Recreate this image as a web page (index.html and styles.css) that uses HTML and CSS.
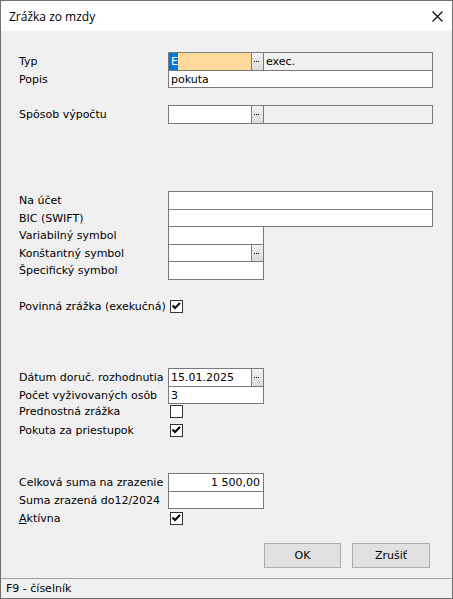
FILE: index.html
```html
<!DOCTYPE html>
<html lang="sk">
<head>
<meta charset="utf-8">
<title>Zrážka zo mzdy</title>
<link rel="stylesheet" href="styles.css">
</head>
<body>
<div class="window">
  <div class="titlebar">
    <span class="title">Zrážka zo mzdy</span>
    <svg class="close" width="11" height="11" viewBox="0 0 11 11"><path d="M0.5 0.5 L10.5 10.5 M10.5 0.5 L0.5 10.5" stroke="#000" stroke-width="1.1" fill="none"/></svg>
  </div>
  <div class="content">
    <div class="group">
      <div class="row">
        <div class="lbl">Typ</div>
        <div class="fld wide">
          <div class="part main yellow nopad"><span class="sel">E</span></div>
          <div class="dots"><svg width="11" height="16" viewBox="0 0 11 16"><rect x="2" y="8" width="1" height="1"/><rect x="4" y="8" width="1" height="1"/><rect x="6" y="8" width="1" height="1"/></svg></div>
          <div class="part rest">exec.</div>
        </div>
      </div>
      <div class="row">
        <div class="lbl">Popis</div>
        <div class="fld wide"><div class="part">pokuta</div></div>
      </div>
    </div>

    <div class="group g-sposob">
      <div class="row">
        <div class="lbl">Spôsob výpočtu</div>
        <div class="fld wide">
          <div class="part main"></div>
          <div class="dots"><svg width="11" height="16" viewBox="0 0 11 16"><rect x="2" y="8" width="1" height="1"/><rect x="4" y="8" width="1" height="1"/><rect x="6" y="8" width="1" height="1"/></svg></div>
          <div class="part rest"></div>
        </div>
      </div>
    </div>

    <div class="group g-bank">
      <div class="row">
        <div class="lbl">Na účet</div>
        <div class="fld wide"><div class="part"></div></div>
      </div>
      <div class="row">
        <div class="lbl">BIC (SWIFT)</div>
        <div class="fld wide"><div class="part"></div></div>
      </div>
      <div class="row">
        <div class="lbl">Variabilný symbol</div>
        <div class="fld short"><div class="part"></div></div>
      </div>
      <div class="row">
        <div class="lbl">Konštantný symbol</div>
        <div class="fld short">
          <div class="part main"></div>
          <div class="dots"><svg width="11" height="16" viewBox="0 0 11 16"><rect x="2" y="8" width="1" height="1"/><rect x="4" y="8" width="1" height="1"/><rect x="6" y="8" width="1" height="1"/></svg></div>
        </div>
      </div>
      <div class="row">
        <div class="lbl">Špecifický symbol</div>
        <div class="fld short"><div class="part"></div></div>
      </div>
    </div>

    <div class="crow g-povinna">
      <div class="lbl">Povinná zrážka (exekučná)</div>
      <div class="cb"><svg width="11" height="11" viewBox="0 0 11 11"><polyline points="1.5,4.5 4,7 9,2" fill="none" stroke="#000" stroke-width="2"/></svg></div>
    </div>

    <div class="group g-datum">
      <div class="row">
        <div class="lbl">Dátum doruč. rozhodnutia</div>
        <div class="fld short">
          <div class="part main">15.01.2025</div>
          <div class="dots"><svg width="11" height="16" viewBox="0 0 11 16"><rect x="2" y="8" width="1" height="1"/><rect x="4" y="8" width="1" height="1"/><rect x="6" y="8" width="1" height="1"/></svg></div>
        </div>
      </div>
      <div class="row">
        <div class="lbl">Počet vyživovaných osôb</div>
        <div class="fld short"><div class="part">3</div></div>
      </div>
      <div class="crow">
        <div class="lbl">Prednostná zrážka</div>
        <div class="cb"></div>
      </div>
      <div class="crow">
        <div class="lbl">Pokuta za priestupok</div>
        <div class="cb"><svg width="11" height="11" viewBox="0 0 11 11"><polyline points="1.5,4.5 4,7 9,2" fill="none" stroke="#000" stroke-width="2"/></svg></div>
      </div>
    </div>

    <div class="group g-suma">
      <div class="row">
        <div class="lbl">Celková suma na zrazenie</div>
        <div class="fld short"><div class="part num">1 500,00</div></div>
      </div>
      <div class="row">
        <div class="lbl">Suma zrazená do12/2024</div>
        <div class="fld short"><div class="part"></div></div>
      </div>
      <div class="crow c-aktivna">
        <div class="lbl"><u>A</u>ktívna</div>
        <div class="cb"><svg width="11" height="11" viewBox="0 0 11 11"><polyline points="1.5,4.5 4,7 9,2" fill="none" stroke="#000" stroke-width="2"/></svg></div>
      </div>
    </div>

    <div class="buttons">
      <button class="btn ok">OK</button>
      <button class="btn cancel">Zrušiť</button>
    </div>
  </div>
  <div class="statusbar">F9 - číselník</div>
</div>
</body>
</html>
```

FILE: styles.css
```css
* { box-sizing: border-box; }

body {
  margin: 0;
  font-family: "DejaVu Sans", Verdana, sans-serif;
  font-size: 11px;
  color: #000;
  background: #fff;
}

.window {
  width: 453px;
  height: 599px;
  border: 1px solid #707070;
  display: flex;
  flex-direction: column;
  background: #f0f0f0;
}

.titlebar {
  height: 30px;
  flex: none;
  background: #fff;
  display: flex;
  align-items: center;
  justify-content: space-between;
  padding: 0 9px 0 8px;
}

.title {
  font-family: "Open Sans", "Noto Sans", sans-serif;
  font-size: 12px;
}

.close { display: block; }

.content {
  flex: 1;
  padding: 21px 0 0 18px;
  display: flex;
  flex-direction: column;
}

.row {
  display: flex;
  height: 18.5px;
}

.row + .row { margin-top: -1px; }

.lbl {
  width: 149px;
  flex: none;
  padding-top: 2px;
  line-height: 16.5px;
  white-space: nowrap;
}

.fld {
  border: 1px solid #7a7a7a;
  background: #fff;
  display: flex;
  height: 100%;
}

.fld.wide { width: 265px; }
.fld.short { width: 96px; }

.part {
  flex: 1;
  padding: 1px 0 0 2px;
  line-height: 15.5px;
  overflow: hidden;
  white-space: nowrap;
}

.part.main { flex: none; width: 82px; }
.part.yellow { background: #ffda9b; }
.part.nopad { padding: 0; }

.sel {
  display: block;
  width: 9px;
  height: 100%;
  background: #0078d7;
  color: #fff;
  padding: 1px 0 0 2px;
  line-height: 15.5px;
}

.part.rest {
  background: #f0f0f0;
  border-left: 1px solid #7a7a7a;
  padding-left: 2px;
}

.part.num {
  text-align: right;
  padding-right: 3px;
}

.dots {
  width: 12px;
  flex: none;
  border-left: 1px solid #7a7a7a;
  background: linear-gradient(#f2f2f2, #dcdcdc);
}

.dots svg { display: block; fill: #000; }

.crow {
  display: flex;
  height: 19px;
}

.crow .lbl {
  padding-top: 0;
  line-height: 15px;
}

.cb {
  width: 13px;
  height: 13px;
  margin: 1px 0 0 2px;
  border: 1px solid #333;
  background: #fff;
}

.cb svg { display: block; }

.g-sposob { margin-top: 17px; }
.g-bank { margin-top: 67.5px; }
.g-povinna { margin-top: 19.5px; }
.g-datum { margin-top: 50px; }
.g-suma { margin-top: 31px; }
.c-aktivna { margin-top: 2px; }

.buttons {
  margin-top: 13px;
  display: flex;
  justify-content: flex-end;
  gap: 11px;
  padding-right: 22px;
}

.btn {
  height: 25px;
  border: 1px solid #adadad;
  background: #e1e1e1;
  font-family: "DejaVu Sans", Verdana, sans-serif;
  font-size: 11px;
  color: #000;
  padding: 0;
}

.btn.ok { width: 77px; }
.btn.cancel { width: 78px; }

.statusbar {
  height: 20px;
  flex: none;
  border-top: 1px solid #a0a0a0;
  padding-left: 5px;
  line-height: 19px;
}
```
